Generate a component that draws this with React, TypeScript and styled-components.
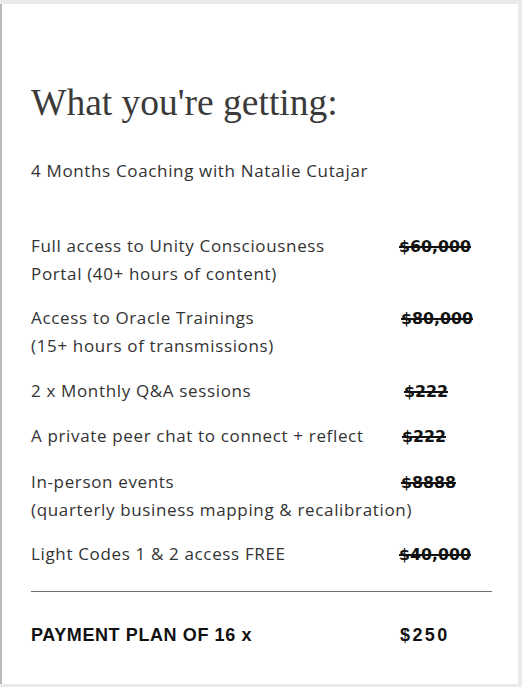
import React from 'react';
import styled, { createGlobalStyle } from 'styled-components';

const GlobalStyle = createGlobalStyle`
  html, body {
    margin: 0;
    padding: 0;
    background: #e9eaec;
  }
`;

const Page = styled.div`
  width: 522px;
  height: 687px;
  box-sizing: border-box;
  padding: 4px 4px 3px 0;
  background: #e9eaec;
`;

const Card = styled.div`
  height: 100%;
  box-sizing: border-box;
  background: #fff;
  border-left: 2px solid #b9b9b9;
  padding: 76px 26px 0 29px;
  color: #333;
  font-family: 'Open Sans', 'Liberation Sans', sans-serif;
`;

const Title = styled.h1`
  margin: 0;
  font-family: 'Liberation Serif', 'DejaVu Serif', serif;
  font-weight: 400;
  font-size: 37.5px;
  line-height: 46px;
  color: #3a3a3a;
`;

const Intro = styled.p`
  margin: 31px 0 0;
  font-size: 17px;
  line-height: 28px;
  letter-spacing: 0.65px;
`;

const List = styled.div`
  margin-top: 47px;
  display: flex;
  flex-direction: column;
  gap: 17.3px;
`;

const Row = styled.div`
  display: grid;
  grid-template-columns: 368px 1fr;
  align-items: baseline;
  font-size: 17px;
  line-height: 27.5px;
  letter-spacing: 0.65px;
`;

const Label = styled.div`
  white-space: nowrap;
`;

const Price = styled.div<{ $shift?: number }>`
  padding-left: ${(p) => p.$shift ?? 0}px;
  font-family: 'DejaVu Sans', 'Liberation Sans', sans-serif;
  font-weight: 700;
  font-size: 15.8px;
  letter-spacing: 0;
  color: #111;
  text-decoration: line-through;
  text-decoration-thickness: 1.5px;
`;

const Divider = styled.hr`
  margin: 22px 0 0;
  border: none;
  border-top: 1px solid #707070;
  width: 461px;
`;

const Total = styled(Row)`
  margin-top: 30px;
  font-family: 'Liberation Sans', sans-serif;
  font-weight: 700;
  font-size: 18px;
  letter-spacing: 0.6px;
  color: #111;
`;

const TotalPrice = styled.div`
  padding-left: 1px;
  letter-spacing: 2.4px;
`;

const items = [
  { lines: ['Full access to Unity Consciousness', 'Portal (40+ hours of content)'], price: '$60,000', shift: 0 },
  { lines: ['Access to Oracle Trainings', '(15+ hours of transmissions)'], price: '$80,000', shift: 2 },
  { lines: ['2 x Monthly Q&A sessions'], price: '$222', shift: 5 },
  { lines: ['A private peer chat to connect + reflect'], price: '$222', shift: 3 },
  { lines: ['In-person events', '(quarterly business mapping & recalibration)'], price: '$8888', shift: 2 },
  { lines: ['Light Codes 1 & 2 access FREE'], price: '$40,000', shift: 0 },
];

export default function App() {
  return (
    <Page>
      <GlobalStyle />
      <Card>
        <Title>What you're getting:</Title>
        <Intro>4 Months Coaching with Natalie Cutajar</Intro>
        <List>
          {items.map((item) => (
            <Row key={item.price + item.lines[0]}>
              <Label>
                {item.lines.map((l, i) => (
                  <React.Fragment key={i}>
                    {i > 0 && <br />}
                    {l}
                  </React.Fragment>
                ))}
              </Label>
              <Price $shift={item.shift}>{item.price}</Price>
            </Row>
          ))}
        </List>
        <Divider />
        <Total>
          <Label>PAYMENT PLAN OF 16 x</Label>
          <TotalPrice>$250</TotalPrice>
        </Total>
      </Card>
    </Page>
  );
}
